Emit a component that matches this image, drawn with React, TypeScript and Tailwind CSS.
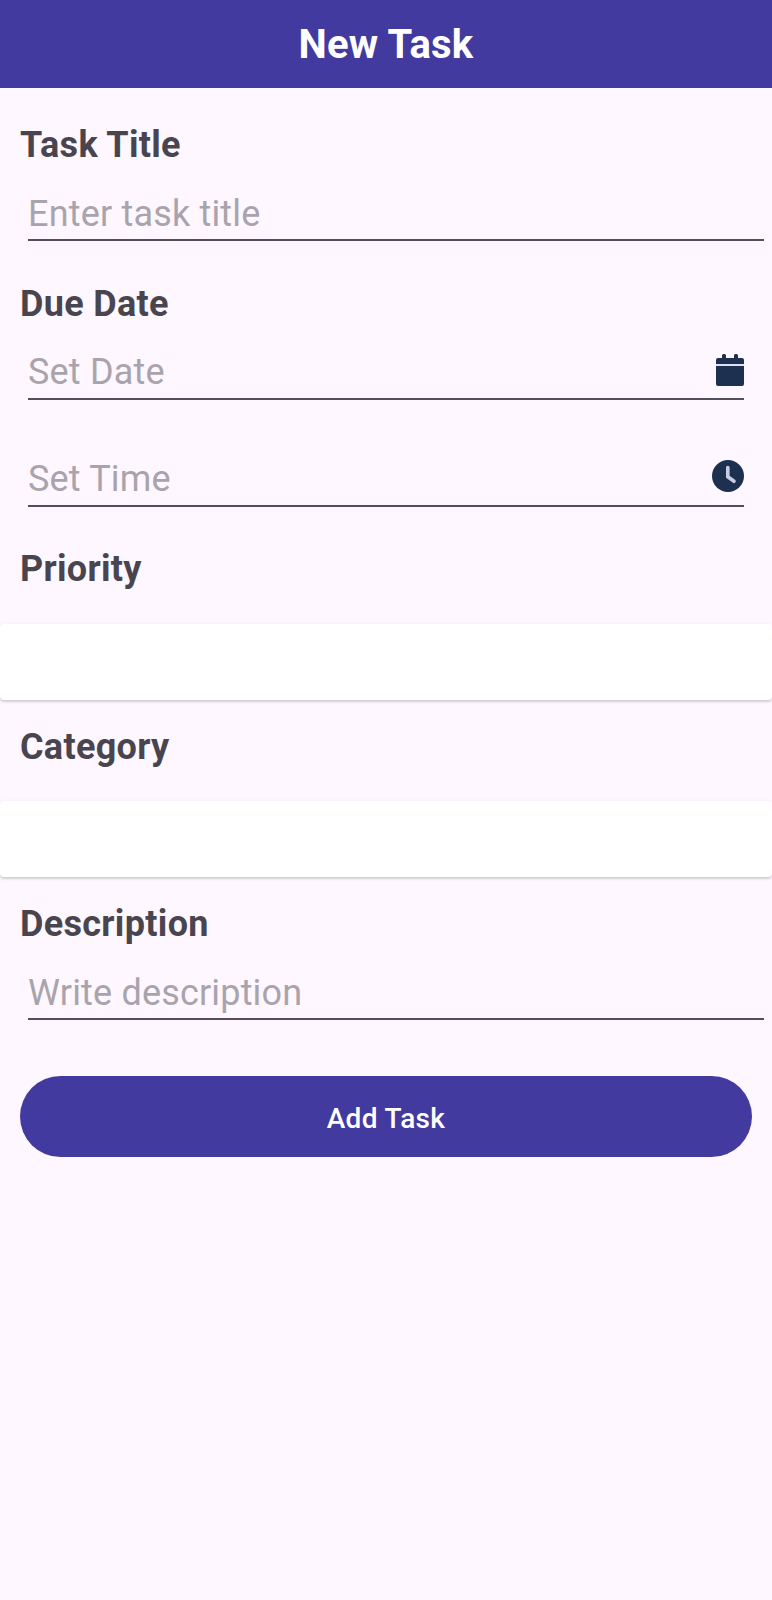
import React from "react";

function Label({ children, className = "" }: { children: React.ReactNode; className?: string }) {
  return (
    <h2 className={`pl-5 text-[36px] leading-[42px] font-bold tracking-[0.32px] text-[#49454f] ${className}`}>{children}</h2>
  );
}

function Field({ hint, icon, className = "" }: { hint: string; icon?: React.ReactNode; className?: string }) {
  return (
    <div className={`ml-7 flex justify-between border-b-2 border-[#534e58] ${className}`}>
      <span className="text-[36px] leading-[42px] tracking-[0.18px] text-[#a9a4ac]">{hint}</span>
      {icon}
    </div>
  );
}

function CalendarIcon() {
  return (
    <svg className="mt-[3px] h-8 w-7 shrink-0" viewBox="0 0 28 32" fill="#1e3050">
      <path d="M2 4h4V1.500a1.500 1.500 0 0 1 1.500-1.500h1A1.500 1.500 0 0 1 10 1.500V4h8V1.500a1.500 1.500 0 0 1 1.500-1.500h1A1.500 1.500 0 0 1 22 1.500V4h4a2 2 0 0 1 2 2v4H0V6a2 2 0 0 1 2-2z" />
      <path d="M0 12h28v18a2 2 0 0 1-2 2H2a2 2 0 0 1-2-2z" />
      <path d="M0 10h28v2H0z" fill="#dfe0f2" />
    </svg>
  );
}

function ClockIcon() {
  return (
    <svg className="mt-[2px] size-8 shrink-0" viewBox="0 0 32 32">
      <circle cx="16" cy="16" r="16" fill="#1e3050" />
      <path d="M15.800 7.500v9.300l6.200 4.500" fill="none" stroke="#c9cde3" strokeWidth="3.600" strokeLinecap="round" />
    </svg>
  );
}

function SelectCard({ className = "" }: { className?: string }) {
  return (
    <div className={`h-[76px] rounded-[4px] bg-white shadow-[0_2px_2px_rgba(0,0,0,0.13),0_1px_5px_rgba(0,0,0,0.07)] ${className}`} />
  );
}

export default function App() {
  return (
    <main className="flex h-[1600px] w-full flex-col overflow-hidden bg-[#fef7ff] font-['Roboto',sans-serif]">
      <header className="flex h-[88px] shrink-0 items-center justify-center bg-[#433a9f] pt-[2px]">
        <h1 className="text-[40px] leading-[48px] font-bold tracking-[0.2px] text-white">New Task</h1>
      </header>
      <Label className="mt-9">Task Title</Label>
      <Field hint="Enter task title" className="mt-[27px] mr-2 h-[48px]" />
      <Label className="mt-[42px]">Due Date</Label>
      <Field hint="Set Date" icon={<CalendarIcon />} className="mt-[26px] mr-7 h-[49px]" />
      <Field hint="Set Time" icon={<ClockIcon />} className="mt-[58px] mr-7 h-[49px]" />
      <Label className="mt-[41px]">Priority</Label>
      <SelectCard className="mt-[34px]" />
      <Label className="mt-[26px]">Category</Label>
      <SelectCard className="mt-[33px]" />
      <Label className="mt-[26px]">Description</Label>
      <Field hint="Write description" className="mt-[27px] mr-2 h-[48px]" />
      <button className="mx-5 mt-14 h-[81px] rounded-full bg-[#433a9f] pt-[5px] text-[28px] leading-8 font-medium tracking-[0.35px] text-white">
        Add Task
      </button>
    </main>
  );
}
